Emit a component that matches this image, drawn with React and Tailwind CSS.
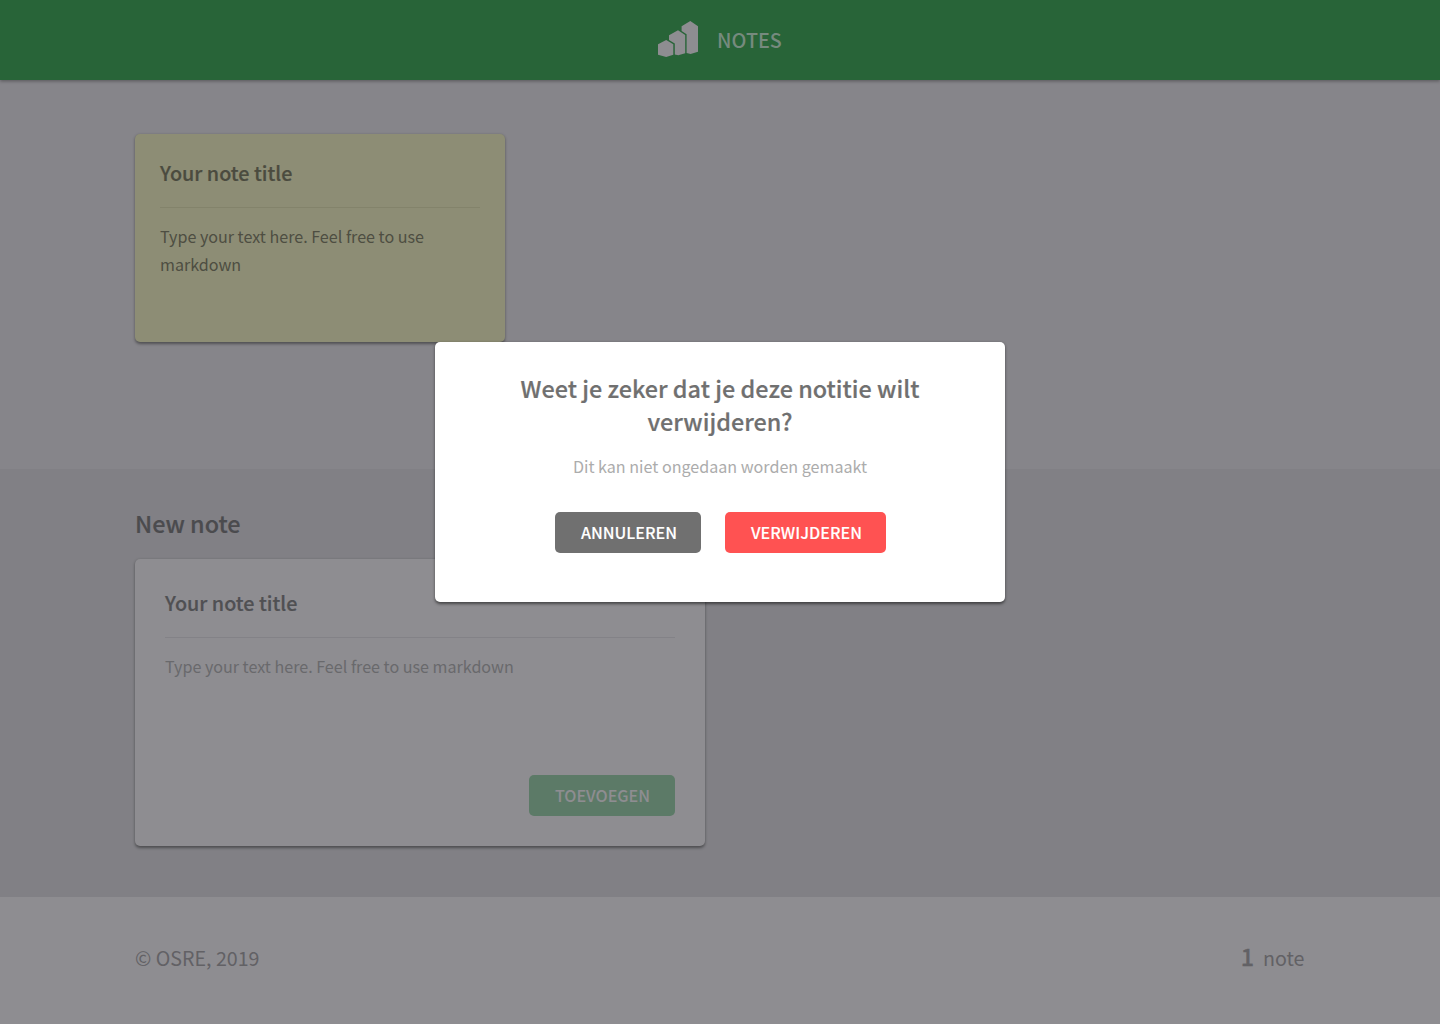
import React from 'react';

function Logo() {
  return (
    <svg className="block h-[36px] w-[40px]" viewBox="0 0 40 36" fill="#8e8d91">
      <path d="M0 23.3 8.2 19 15.3 23.3V33.7L8.2 36 0 33.7Z" />
      <path d="M11 14.3 20 9.2 27.2 14V32.3L20.3 34.3 16.8 33.4V22.5L11 19.1Z" />
      <path d="M23.6 5.3 32.3 0 40 5.3V30.8L32.6 33 28.6 32V13.2L23.6 9.9Z" />
    </svg>
  );
}

function NoteHeading({ children, className = '' }) {
  return (
    <h3
      className={`h-[49px] border-b text-[19.75px] leading-7 font-medium [-webkit-text-stroke:0.2px] ${className}`}
    >
      {children}
    </h3>
  );
}

function Button({ children, className = '' }) {
  return (
    <button
      type="button"
      className={`flex h-[41px] items-center justify-center rounded-[5px] pb-0.5 text-[16.1px] leading-5 font-medium uppercase [-webkit-text-stroke:0.1px] ${className}`}
    >
      {children}
    </button>
  );
}

function Dialog() {
  return (
    <div className="absolute inset-0 flex items-start justify-center pt-[342px]">
      <div
        role="dialog"
        className="flex h-[260px] w-[570px] flex-col items-center rounded-[5px] bg-white px-[70px] pt-[30px] shadow-[0_1.5px_3px_rgba(0,0,0,0.5)]"
      >
        <h2 className="text-center text-[23.4px] leading-[33px] font-medium text-[#707070] [-webkit-text-stroke:0.2px]">
          Weet je zeker dat je deze notitie wilt verwijderen?
        </h2>
        <p className="mt-[14px] text-[16.1px] leading-7 text-[#acacac]">
          Dit kan niet ongedaan worden gemaakt
        </p>
        <div className="mt-[32px] ml-px flex gap-6">
          <Button className="w-[146px] bg-[#707070] pl-0.5 text-white">Annuleren</Button>
          <Button className="w-[161px] bg-[#ff5252] pl-0.5 text-white">Verwijderen</Button>
        </div>
      </div>
    </div>
  );
}

export default function App() {
  return (
    <div className="relative flex h-[1024px] w-full flex-col overflow-hidden bg-[#86858a] font-['Noto_Sans_CJK_SC',sans-serif]">
      <header className="relative flex h-20 shrink-0 justify-center gap-[19px] bg-[#286438] shadow-[0_1.5px_3px_rgba(0,0,0,0.3)]">
        <div className="pt-[21px]">
          <Logo />
        </div>
        <h1 className="pt-[26px] text-[19.75px] leading-7 font-medium text-[#768a7e]">NOTES</h1>
      </header>

      <main className="h-[389px] shrink-0 px-[135px] pt-[54px]">
        <article className="h-[208px] w-[370px] rounded-[5px] bg-[#8d8d75] p-[25px] shadow-[0_1.5px_3px_rgba(0,0,0,0.4)]">
          <NoteHeading className="border-[#83836b] text-[#4b4b3f]">Your note title</NoteHeading>
          <p className="mt-[14px] text-[16.1px] leading-7 text-[#4e4e42]">
            Type your text here. Feel free to use markdown
          </p>
        </article>
      </main>

      <section className="h-[428px] shrink-0 bg-[#818085] px-[135px] pt-[38px]">
        <h2 className="text-[23.4px] leading-[33px] font-medium text-[#4b4b4e] [-webkit-text-stroke:0.2px]">
          New note
        </h2>
        <article className="mt-[19px] flex h-[287px] w-[570px] flex-col rounded-[5px] bg-[#8e8d91] p-[30px] shadow-[0_1.5px_3px_rgba(0,0,0,0.4)]">
          <NoteHeading className="border-[#838287] text-[#505053]">Your note title</NoteHeading>
          <p className="mt-[14px] text-[16.1px] leading-7 text-[#69696c]">
            Type your text here. Feel free to use markdown
          </p>
          <Button className="mt-auto w-[146px] self-end bg-[#5c7a67] pl-px text-[#8e8d91]">
            Toevoegen
          </Button>
        </article>
      </section>

      <footer className="flex grow items-start justify-between bg-[#8e8d91] px-[135px] pt-[47px] text-[19.65px] leading-7 text-[#626165]">
        <span>© OSRE, 2019</span>
        <span className="-mt-0.5 mr-[0.5px] flex items-baseline gap-[9px]">
          <strong className="text-[23.4px] leading-7 font-medium [-webkit-text-stroke:0.3px]">1</strong>
          note
        </span>
      </footer>

      <Dialog />
    </div>
  );
}
